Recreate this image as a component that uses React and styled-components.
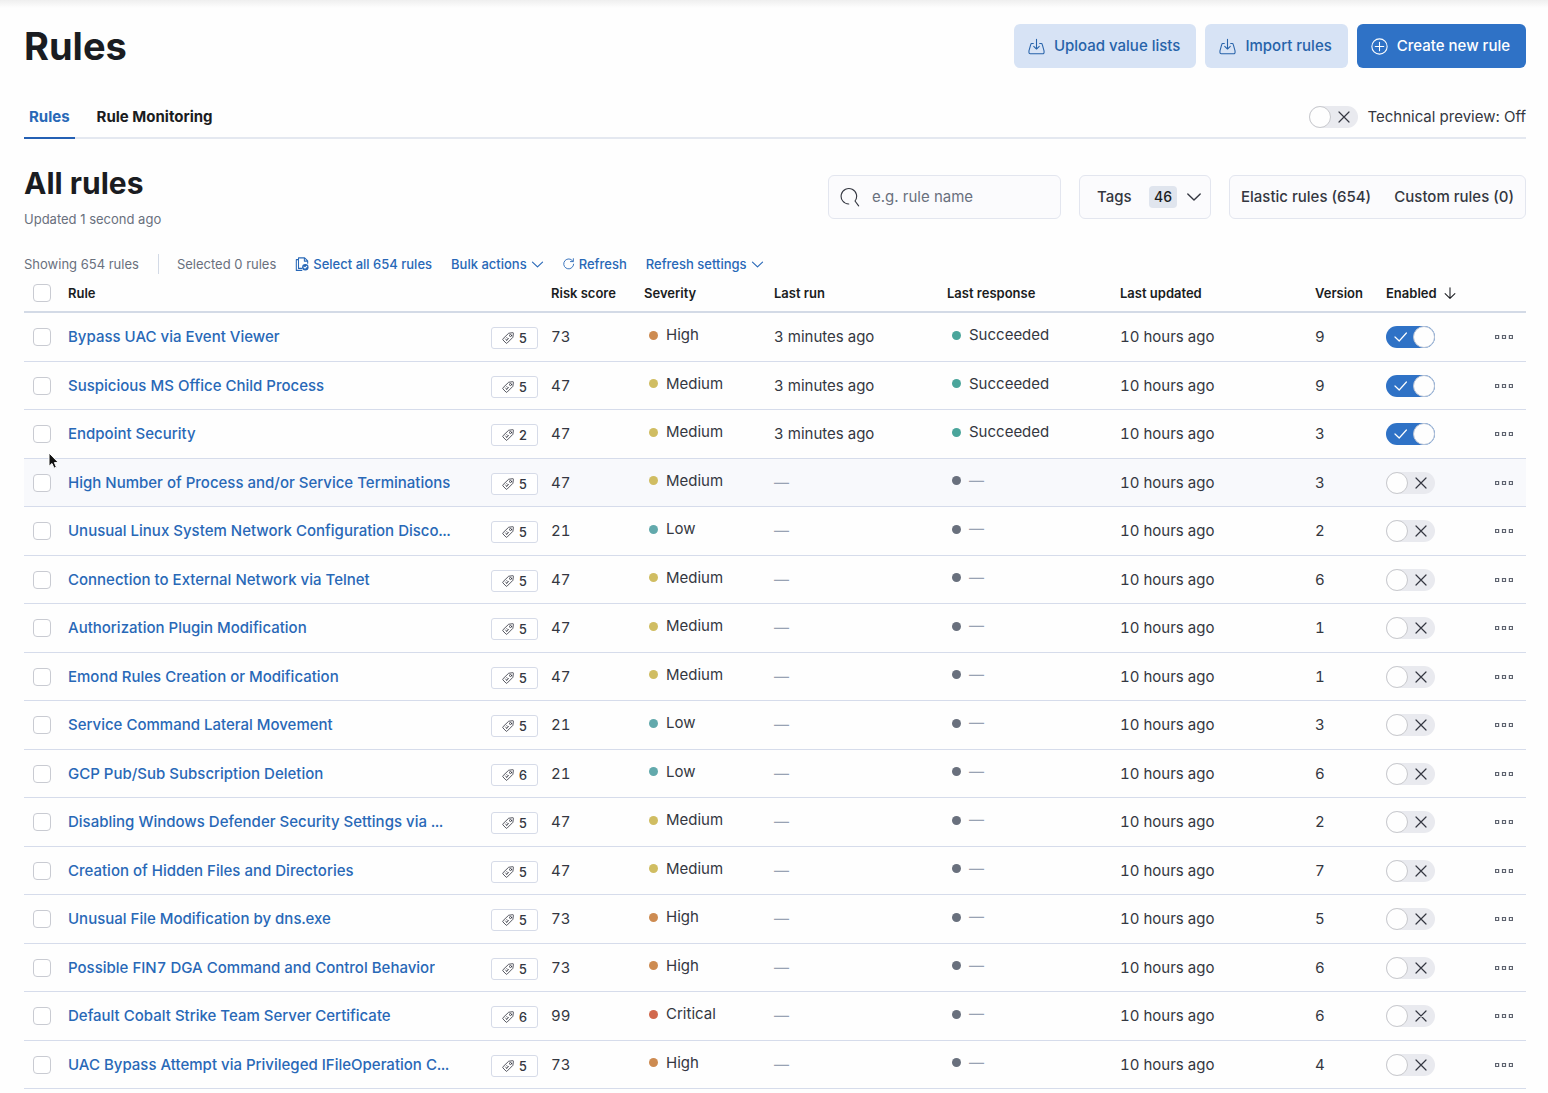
import React, { useState } from 'react';
import styled, { createGlobalStyle, css } from 'styled-components';

const c = {
  page: '#fefefe',
  title: '#1a1c21',
  text: '#343741',
  subdued: '#69707d',
  link: '#2868b7',
  primary: '#2f72c6',
  primaryText: '#2662a9',
  primaryLight: '#d7e3f5',
  border: '#d3dae6',
  borderLight: '#e4e8f0',
  field: '#fbfbfd',
};

const GlobalStyle = createGlobalStyle`
  *, *::before, *::after { box-sizing: border-box; }
  body {
    margin: 0;
    background: ${c.page};
    color: ${c.text};
    font-family: Inter, "Liberation Sans", sans-serif;
    font-size: 15px;
    line-height: 20px;
  }
  button, input { font: inherit; color: inherit; }
  button { border: 0; padding: 0; background: none; cursor: pointer; }
  svg { display: block; flex: none; }
`;

const Page = styled.main`
  padding: 24px 22px 0 24px;
  min-height: 100vh;
  overflow: hidden;
  background: linear-gradient(#efefef, ${c.page} 8px);
`;

const Bar = styled.div`
  display: flex;
  align-items: center;
  justify-content: space-between;
`;

const PageTitle = styled.h1`
  margin: 0;
  color: ${c.title};
  font-size: 38px;
  line-height: 44px;
  font-weight: 700;
`;

const Actions = styled.div`
  display: flex;
  gap: 9px;
`;

const Button = styled.button`
  display: flex;
  align-items: center;
  gap: 9px;
  height: 44px;
  padding: 0 16px 0 14px;
  border-radius: 6px;
  font-weight: 500;
  color: ${(p) => (p.$fill ? '#fff' : c.primaryText)};
  background: ${(p) => (p.$fill ? c.primary : c.primaryLight)};
`;

const TabBar = styled(Bar)`
  margin-top: 27px;
  border-bottom: 2px solid ${c.borderLight};
`;

const Tabs = styled.nav`
  display: flex;
  gap: 17px;
  margin-bottom: -2px;
`;

const Tab = styled.a`
  padding: 12px 5px 10px;
  font-weight: 700;
  text-decoration: none;
  color: ${(p) => (p.$active ? c.link : c.title)};
  border-bottom: 2px solid ${(p) => (p.$active ? '#2460b4' : 'transparent')};
`;

const SwitchLabel = styled.label`
  display: flex;
  align-items: center;
  gap: 9px;
  padding-top: 2px;
`;

const SwitchBox = styled.span`
  display: inline-grid;
  grid-template-columns: 49px;
  align-items: center;
  vertical-align: middle;
  > * { grid-area: 1 / 1; }
  svg {
    pointer-events: none;
    justify-self: ${(p) => (p.$on ? 'start' : 'end')};
    margin: 0 8px;
  }
`;

const SwitchInput = styled.input`
  appearance: none;
  display: flex;
  justify-content: ${(p) => (p.checked ? 'flex-end' : 'flex-start')};
  width: 49px;
  height: 22px;
  margin: 0;
  border-radius: 11px;
  background: ${(p) => (p.checked ? c.primary : '#e9eaef')};
  cursor: pointer;
  &::before {
    content: '';
    width: 22px;
    height: 22px;
    border-radius: 50%;
    border: 1px solid ${(p) => (p.checked ? '#b9c4d6' : '#c8c9cd')};
    background: #fefefe;
  }
`;

const SectionBar = styled(Bar)`
  margin-top: 26px;
`;

const SectionTitle = styled.h2`
  margin: 0;
  color: ${c.title};
  font-size: 30px;
  line-height: 36px;
  font-weight: 700;
`;

const Updated = styled.p`
  margin: 8px 0 0;
  font-size: 13px;
  color: ${c.subdued};
`;

const Filters = styled.div`
  display: flex;
  gap: 18px;
`;

const boxed = css`
  display: flex;
  align-items: center;
  height: 44px;
  border: 1px solid #e3e6ef;
  border-radius: 6px;
  background: ${c.field};
`;

const Search = styled.label`
  ${boxed}
  width: 233px;
  padding: 0 11px;
  gap: 12px;
`;

const SearchInput = styled.input`
  flex: 1;
  min-width: 0;
  padding: 0;
  border: 0;
  outline: 0;
  background: none;
  &::placeholder { color: ${c.subdued}; opacity: 1; }
`;

const TagsFilter = styled.button`
  ${boxed}
  width: 132px;
  padding: 0 8px 0 17px;
  font-weight: 500;
`;

const Count = styled.span`
  margin: 0 9px 0 auto;
  padding: 0 5px;
  border-radius: 4px;
  background: #e0e5ee;
  color: ${c.title};
  font-size: 14px;
  line-height: 22px;
`;

const FilterGroup = styled.div`
  ${boxed}
  width: 297px;
  padding: 0 11px;
  justify-content: space-between;
`;

const GroupButton = styled.button`
  font-weight: 500;
`;

const Utility = styled.div`
  display: flex;
  align-items: center;
  margin-top: 25px;
  font-size: 13px;
  color: ${c.subdued};
`;

const UtilityText = styled.span`
  line-height: 20px;
  & + & {
    margin-left: 19px;
    padding-left: 18px;
    border-left: 1px solid ${c.border};
  }
`;

const UtilityButton = styled.button`
  display: flex;
  align-items: center;
  gap: 4px;
  margin-left: 19px;
  font-weight: 500;
  color: ${c.link};
`;

const Table = styled.table`
  width: 100%;
  table-layout: fixed;
  border-collapse: separate;
  border-spacing: 0;
`;

const Col = styled.col`
  width: ${(p) => (p.$w ? `${p.$w}px` : 'auto')};
`;

const Th = styled.th`
  height: 39px;
  padding: 0 8px;
  border-bottom: 2px solid ${c.border};
  text-align: left;
  font-size: 13px;
  font-weight: 600;
  color: ${c.title};
  white-space: nowrap;
`;

const SortButton = styled.button`
  display: flex;
  align-items: center;
  gap: 6px;
  font-weight: 600;
`;

const Row = styled.tr`
  height: 48px;
  &:nth-child(odd) { height: 49px; }
  background: ${(p) => (p.$hover ? '#f8f9fc' : 'transparent')};
`;

const Td = styled.td`
  padding: ${(p) => (p.$raised ? '0 8px 4px' : '0 8px')};
  border-bottom: 1px solid #d6dceb;
  vertical-align: middle;
  white-space: nowrap;
  font-variant-numeric: tabular-nums;
`;

const Checkbox = styled.input`
  appearance: none;
  display: block;
  width: 18px;
  height: 18px;
  margin: 0 auto;
  border: 1px solid #c9cbd2;
  border-radius: 4px;
  background: #fff;
`;

const RuleCell = styled.div`
  display: flex;
  align-items: center;
  justify-content: space-between;
`;

const RuleName = styled.span`
  overflow: hidden;
  text-overflow: ellipsis;
`;

const RuleLink = styled.a`
  color: ${c.link};
  font-weight: 500;
  text-decoration: none;
`;

const TagBadge = styled.button`
  display: flex;
  align-items: center;
  justify-content: center;
  gap: 5px;
  width: 47px;
  height: 22px;
  margin: 2px -3px 0 0;
  border: 1px solid #d6dbe8;
  border-radius: 3px;
  background: #fff;
  font-size: 13px;
  font-weight: 500;
`;

const Health = styled.span`
  display: flex;
  align-items: center;
  gap: 8px;
  padding-left: 5px;
  &::before {
    content: '';
    width: 9px;
    height: 9px;
    border-radius: 50%;
    background: ${(p) => p.$color};
  }
`;

const Dash = styled.span`
  color: #98a2b3;
`;

const More = styled.button`
  display: block;
  margin: 0 auto;
  color: #5f6470;
`;

const Pointer = styled.svg`
  position: absolute;
  left: 47px;
  top: 451px;
`;

const Icon = ({ size = 17, children, ...rest }) => (
  <svg width={size} height={size} viewBox="0 0 16 16" fill="none" stroke="currentColor" strokeLinecap="round" strokeLinejoin="round" aria-hidden="true" {...rest}>
    {children}
  </svg>
);

const ImportIcon = () => (
  <Icon>
    <path d="M5 5.2H3.6a1 1 0 0 0-1 .8L.9 12.2v1.4a1.2 1.2 0 0 0 1.2 1.2h11.8a1.2 1.2 0 0 0 1.2-1.2v-1.4L13.4 6a1 1 0 0 0-1-.8H11M8 1.2v9M5.4 7.8 8 10.4l2.6-2.6" />
  </Icon>
);

const PlusIcon = () => (
  <Icon>
    <circle cx="8" cy="8" r="7.2" />
    <path d="M8 4v8M4 8h8" />
  </Icon>
);

const SearchIcon = () => (
  <Icon size={20}>
    <path d="M7 13.6A6.2 6.2 0 1 1 12 11.2l2.9 3.9" strokeWidth=".9" />
  </Icon>
);

const ChevronIcon = ({ size }) => (
  <Icon size={size}>
    <path d="M1.8 5 8 11l6.2-6" strokeWidth="1.4" />
  </Icon>
);

const PagesIcon = () => (
  <Icon size={14} strokeWidth="1.2">
    <path d="M4 1h7l3.5 3.4v2.8M4 1v12h3.6M3.6 3H1.5v12.3h6.3M10.7 1v3.7h3.8" />
    <circle cx="11.8" cy="11.6" r="3.7" fill="currentColor" stroke="none" />
    <path d="m10.2 11.6 1.2 1.2 2-2.2" stroke="#fff" />
  </Icon>
);

const RefreshIcon = () => (
  <Icon size={12} strokeWidth="1.2">
    <path d="M14.2 8.2A6.6 6.6 0 1 1 10.6 2l2.6 2.4M13.8.9v3.9H9.9" />
  </Icon>
);

const TagIcon = () => (
  <Icon size={12} strokeWidth="1.1">
    <path d="M9.4 1.6 14.4.9a.8.8 0 0 1 .8.9l-.7 5.3-7.7 7.7a1 1 0 0 1-1.4 0l-4.2-4.3a1 1 0 0 1 0-1.4z" />
    <circle cx="11.4" cy="4.7" r="1.4" />
    <path d="m4.6 9.2 1.2 1.2M6.4 7.4l1.2 1.2M6 11.6l2.6-2.8" />
  </Icon>
);

const ArrowDownIcon = () => (
  <Icon size={14} strokeWidth="1.2">
    <path d="M8 2v12M2.4 8.6 8 14.2l5.6-5.6" />
  </Icon>
);

const CrossIcon = () => (
  <svg width="12" height="12" viewBox="0 0 12 12" fill="none" stroke="#343741" strokeLinecap="round" strokeWidth="1.2" aria-hidden="true">
    <path d="m1 1 10 10M11 1 1 11" />
  </svg>
);

const CheckIcon = () => (
  <svg width="13" height="12" viewBox="0 0 13 12" fill="none" stroke="#fff" strokeLinecap="round" strokeLinejoin="round" strokeWidth="1.2" aria-hidden="true">
    <path d="m1 6 4.2 4L12.4 2" />
  </svg>
);

const DotsIcon = () => (
  <svg width="18" height="8" viewBox="0 0 18 8" fill="none" stroke="currentColor" strokeWidth="1.2" aria-hidden="true">
    <path d="M.6 2.5h3v3h-3zM7.5 2.5h3v3h-3zM14.4 2.5h3v3h-3z" />
  </svg>
);

function Switch({ initial = false, label }) {
  const [on, setOn] = useState(initial);
  return (
    <SwitchBox $on={on}>
      <SwitchInput type="checkbox" role="switch" aria-label={label} checked={on} onChange={() => setOn(!on)} />
      {on ? <CheckIcon /> : <CrossIcon />}
    </SwitchBox>
  );
}

const severityColor = {
  Low: '#62a9ac',
  Medium: '#d0bd62',
  High: '#cd8b51',
  Critical: '#d1684c',
};

// name, tags, risk score, severity, version, enabled
const rules = [
  ['Bypass UAC via Event Viewer', 5, 73, 'High', 9, true],
  ['Suspicious MS Office Child Process', 5, 47, 'Medium', 9, true],
  ['Endpoint Security', 2, 47, 'Medium', 3, true],
  ['High Number of Process and/or Service Terminations', 5, 47, 'Medium', 3],
  ['Unusual Linux System Network Configuration Disco...', 5, 21, 'Low', 2],
  ['Connection to External Network via Telnet', 5, 47, 'Medium', 6],
  ['Authorization Plugin Modification', 5, 47, 'Medium', 1],
  ['Emond Rules Creation or Modification', 5, 47, 'Medium', 1],
  ['Service Command Lateral Movement', 5, 21, 'Low', 3],
  ['GCP Pub/Sub Subscription Deletion', 6, 21, 'Low', 6],
  ['Disabling Windows Defender Security Settings via ...', 5, 47, 'Medium', 2],
  ['Creation of Hidden Files and Directories', 5, 47, 'Medium', 7],
  ['Unusual File Modification by dns.exe', 5, 73, 'High', 5],
  ['Possible FIN7 DGA Command and Control Behavior', 5, 73, 'High', 6],
  ['Default Cobalt Strike Team Server Certificate', 6, 99, 'Critical', 6],
  ['UAC Bypass Attempt via Privileged IFileOperation C...', 5, 73, 'High', 4],
];

const columns = [36, null, 93, 130, 173, 173, 195, 71, 104, 44];

function RuleRow({ rule, hover }) {
  const [name, tags, risk, severity, version, enabled] = rule;
  return (
    <Row $hover={hover}>
      <Td><Checkbox type="checkbox" aria-label={`Select ${name}`} /></Td>
      <Td>
        <RuleCell>
          <RuleName><RuleLink href="#rule">{name}</RuleLink></RuleName>
          <TagBadge><TagIcon />{tags}</TagBadge>
        </RuleCell>
      </Td>
      <Td>{risk}</Td>
      <Td $raised><Health $color={severityColor[severity]}>{severity}</Health></Td>
      <Td>{enabled ? '3 minutes ago' : <Dash>—</Dash>}</Td>
      <Td $raised>
        <Health $color={enabled ? '#4aa59b' : '#69707d'}>{enabled ? 'Succeeded' : <Dash>—</Dash>}</Health>
      </Td>
      <Td>10 hours ago</Td>
      <Td>{version}</Td>
      <Td><Switch initial={Boolean(enabled)} label={`Enable ${name}`} /></Td>
      <Td><More aria-label="All actions"><DotsIcon /></More></Td>
    </Row>
  );
}

export default function App() {
  return (
    <Page>
      <GlobalStyle />
      <Bar>
        <PageTitle>Rules</PageTitle>
        <Actions>
          <Button><ImportIcon />Upload value lists</Button>
          <Button><ImportIcon />Import rules</Button>
          <Button $fill><PlusIcon />Create new rule</Button>
        </Actions>
      </Bar>

      <TabBar>
        <Tabs>
          <Tab href="#rules" $active>Rules</Tab>
          <Tab href="#monitoring">Rule Monitoring</Tab>
        </Tabs>
        <SwitchLabel><Switch />Technical preview: Off</SwitchLabel>
      </TabBar>

      <SectionBar>
        <div>
          <SectionTitle>All rules</SectionTitle>
          <Updated>Updated 1 second ago</Updated>
        </div>
        <Filters>
          <Search>
            <SearchIcon />
            <SearchInput type="search" aria-label="Search rules" placeholder="e.g. rule name" />
          </Search>
          <TagsFilter>Tags<Count>46</Count><ChevronIcon size={16} /></TagsFilter>
          <FilterGroup>
            <GroupButton>Elastic rules (654)</GroupButton>
            <GroupButton>Custom rules (0)</GroupButton>
          </FilterGroup>
        </Filters>
      </SectionBar>

      <Utility>
        <UtilityText>Showing 654 rules</UtilityText>
        <UtilityText>Selected 0 rules</UtilityText>
        <UtilityButton><PagesIcon />Select all 654 rules</UtilityButton>
        <UtilityButton>Bulk actions<ChevronIcon size={13} /></UtilityButton>
        <UtilityButton><RefreshIcon />Refresh</UtilityButton>
        <UtilityButton>Refresh settings<ChevronIcon size={13} /></UtilityButton>
      </Utility>

      <Table>
        <colgroup>{columns.map((w, i) => <Col key={i} $w={w} />)}</colgroup>
        <thead>
          <tr>
            <Th><Checkbox type="checkbox" aria-label="Select all rows" /></Th>
            <Th>Rule</Th>
            <Th>Risk score</Th>
            <Th>Severity</Th>
            <Th>Last run</Th>
            <Th>Last response</Th>
            <Th>Last updated</Th>
            <Th>Version</Th>
            <Th><SortButton>Enabled<ArrowDownIcon /></SortButton></Th>
            <Th />
          </tr>
        </thead>
        <tbody>
          {rules.map((rule, i) => <RuleRow key={rule[0]} rule={rule} hover={i === 3} />)}
        </tbody>
      </Table>

      <Pointer width="14" height="20" viewBox="0 0 14 20" aria-hidden="true">
        <path d="M2 2v13.2l3-2.7 2 4.7 2.4-1-2-4.6h4z" fill="#111" stroke="#fff" strokeWidth="1" />
      </Pointer>
    </Page>
  );
}
